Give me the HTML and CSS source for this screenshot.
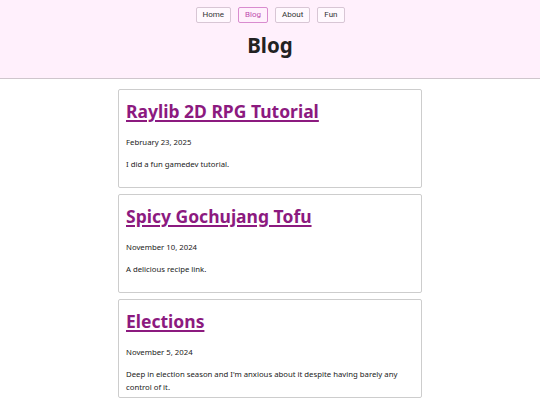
FILE: index.html
```html
<!DOCTYPE html>
<html>
<head>
<meta charset="utf-8">
<link rel="stylesheet" href="styles.css">
</head>
<body>
<header class="site-header">
  <nav class="nav">
    <a class="nav-btn" href="#">Home</a>
    <a class="nav-btn active" href="#">Blog</a>
    <a class="nav-btn" href="#">About</a>
    <a class="nav-btn" href="#">Fun</a>
  </nav>
  <h1 class="page-title">Blog</h1>
</header>
<main class="posts">
  <article class="post">
    <h2 class="post-title"><a href="#">Raylib 2D RPG Tutorial</a></h2>
    <p class="post-date">February 23, 2025</p>
    <p class="post-text">I did a fun gamedev tutorial.</p>
  </article>
  <article class="post">
    <h2 class="post-title"><a href="#">Spicy Gochujang Tofu</a></h2>
    <p class="post-date">November 10, 2024</p>
    <p class="post-text">A delicious recipe link.</p>
  </article>
  <article class="post">
    <h2 class="post-title"><a href="#">Elections</a></h2>
    <p class="post-date">November 5, 2024</p>
    <p class="post-text">Deep in election season and I'm anxious about it despite having barely any control of it.</p>
  </article>
</main>
</body>
</html>
```
FILE: styles.css
```css
* { box-sizing: border-box; }
html, body { margin: 0; padding: 0; }
body {
  font-family: "Noto Sans", "Open Sans", sans-serif;
  color: #222;
  background: #fff;
}
.site-header {
  background: #fff0fc;
  border-bottom: 1px solid #cfc6cd;
  height: 79px;
  padding-top: 7px;
  display: flex;
  flex-direction: column;
  align-items: center;
}
.nav {
  display: flex;
  gap: 7px;
}
.nav-btn {
  font-family: Roboto, "Liberation Sans", sans-serif;
  font-size: 8px;
  color: #333;
  text-decoration: none;
  height: 16px;
  line-height: 14px;
  padding: 0 6px;
  border: 1px solid #d8c6d5;
  border-radius: 2px;
  background: #fff8fe;
}
.nav-btn.active {
  color: #c04cae;
  border-color: #d98ccf;
  background: #fff0fc;
}
.page-title {
  margin: 8px 0 0;
  font-size: 20.5px;
  line-height: 28px;
  font-weight: 700;
  color: #222;
}
.posts {
  width: 304px;
  margin: 10px auto 0;
  display: flex;
  flex-direction: column;
  gap: 6px;
}
.post {
  border: 1px solid #cdcdcd;
  border-radius: 2px;
  padding: 8px 7px;
  height: 99px;
}
.post-title {
  margin: 0;
  font-size: 17.5px;
  line-height: 26px;
  font-weight: 700;
}
.post-title a {
  color: #8c1a7f;
  text-decoration: underline;
  text-decoration-thickness: 2px;
  text-underline-offset: 2px;
}
.post-date {
  margin: 12px 0 0;
  font-size: 7.75px;
  line-height: 12px;
}
.post-text {
  margin: 10px 0 0;
  font-size: 7.75px;
  line-height: 13px;
}
```
